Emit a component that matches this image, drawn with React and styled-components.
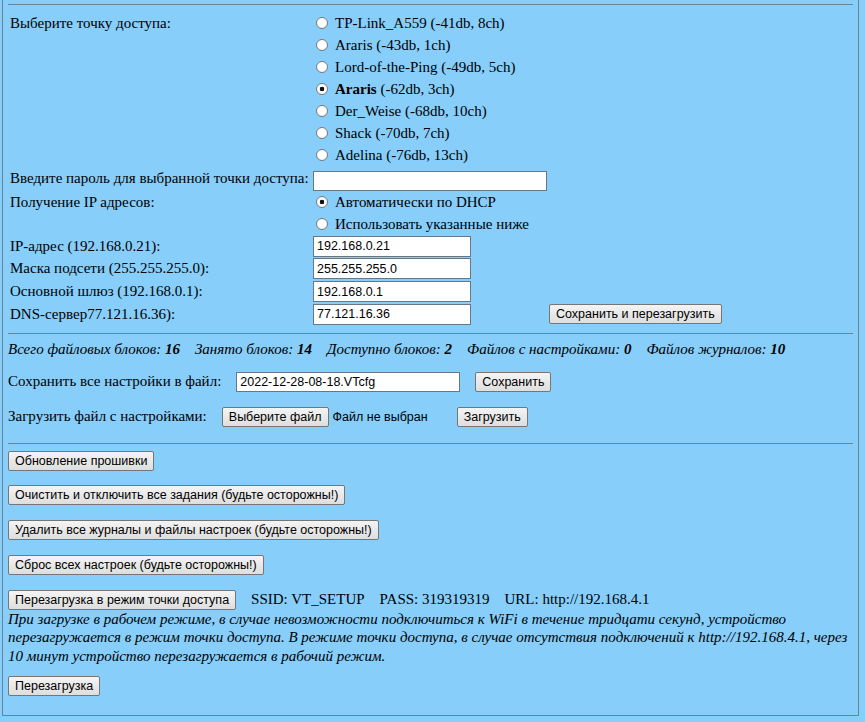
import React from 'react';
import styled, { createGlobalStyle } from 'styled-components';

const Global = createGlobalStyle`
  html, body { margin: 0; padding: 0; background: #87cefa; }
  body {
    font-family: "Liberation Serif", "Times New Roman", serif;
    font-size: 15px;
    color: #000;
  }
`;

const Frame = styled.div`
  box-sizing: border-box;
  height: 716px;
  margin: 0 6px 0 2px;
  border: 1px solid #6b8396;
  border-top: none;
  padding: 4px 5px 0 5px;
`;

const Rule = styled.hr`
  margin: ${p => p.$mt || 0}px 0 0 0;
  border: 0;
  border-top: 1px solid #6f8597;
  height: 0;
`;

const Grid = styled.div`
  display: grid;
  grid-template-columns: 301px 234px auto;
  column-gap: 2px;
  padding-left: 2px;
  margin-top: 7px;
`;

const Label = styled.div`
  grid-column: 1;
  display: flex;
  align-items: center;
  height: ${p => p.$h}px;
  align-self: start;
  white-space: nowrap;
`;

const RadioList = styled.div`
  grid-column: 2 / 4;
  display: flex;
  flex-direction: column;
`;

const RadioRow = styled.label`
  display: flex;
  align-items: center;
  height: 22px;
  white-space: nowrap;
`;

const Radio = styled.input.attrs({ type: 'radio' })`
  appearance: none;
  -webkit-appearance: none;
  box-sizing: border-box;
  width: 12px;
  height: 12px;
  margin: 0 7px 0 3px;
  border-radius: 50%;
  border: 1px solid #7a7a7a;
  background: radial-gradient(circle at 50% 40%, #ffffff 0, #ffffff 55%, #e4e4e4 100%);
  &:checked {
    background: radial-gradient(circle, #111 0, #111 2px, #ffffff 2.6px, #ffffff 100%);
  }
`;

const Cell = styled.div`
  grid-column: ${p => p.$col || 2};
  display: flex;
  align-items: ${p => p.$align || 'center'};
  height: ${p => p.$h}px;
  box-sizing: border-box;
`;

const Field = styled.input`
  box-sizing: border-box;
  width: ${p => p.$w}px;
  height: ${p => p.$hh || 20}px;
  margin: 0;
  padding: 0 3px;
  font-family: "Liberation Sans", Arial, sans-serif;
  font-size: 12.5px;
  color: #000;
  background: #fff;
  border: 1px solid #66778a;
  border-radius: 0;
  outline: none;
`;

const Btn = styled.button`
  box-sizing: border-box;
  height: 20px;
  margin: 0;
  padding: 0 6px;
  font-family: "Liberation Sans", Arial, sans-serif;
  font-size: 12.5px;
  color: #000;
  background: linear-gradient(#f4f4f4, #dedede);
  border: 1px solid #767676;
  border-radius: 2px;
  white-space: nowrap;
  cursor: default;
  flex: none;
`;

const Stats = styled.div`
  display: flex;
  gap: 15px;
  font-style: italic;
  line-height: 22px;
  margin-top: 4px;
  white-space: nowrap;
`;

const Line = styled.div`
  display: flex;
  align-items: center;
  height: 24px;
  margin-top: ${p => p.$mt || 0}px;
  gap: 15px;
  white-space: nowrap;
`;

const Plain = styled.span`
  font-family: "Liberation Sans", Arial, sans-serif;
  font-size: 12.5px;
  margin-left: -11px;
  margin-right: 14px;
`;

const Stack = styled.div`
  display: flex;
  flex-direction: column;
  align-items: flex-start;
  gap: 14.75px;
  margin-top: 7px;
`;

const SsidRow = styled.div`
  display: flex;
  align-items: center;
  gap: 15px;
  white-space: nowrap;
`;

const Info = styled.span`
  display: flex;
  gap: 15px;
`;

const Note = styled.p`
  margin: 0;
  font-style: italic;
  line-height: 18.5px;
`;

const Tail = styled.div`
  margin-top: 11px;
`;

const networks = [
  ['TP-Link_A559', '(-41db, 8ch)'],
  ['Araris', '(-43db, 1ch)'],
  ['Lord-of-the-Ping', '(-49db, 5ch)'],
  ['Araris', '(-62db, 3ch)', true],
  ['Der_Weise', '(-68db, 10ch)'],
  ['Shack', '(-70db, 7ch)'],
  ['Adelina', '(-76db, 13ch)'],
];

const ipRows = [
  ['IP-адрес (192.168.0.21):', '192.168.0.21'],
  ['Маска подсети (255.255.255.0):', '255.255.255.0'],
  ['Основной шлюз (192.168.0.1):', '192.168.0.1'],
  ['DNS-сервер77.121.16.36):', '77.121.16.36', true],
];

export default function App() {
  return (
    <>
      <Global />
      <Frame>
        <Rule />
        <Grid>
          <Label $h={22}>Выберите точку доступа:</Label>
          <RadioList>
            {networks.map(([name, info, sel], i) => (
              <RadioRow key={i}>
                <Radio name="ap" defaultChecked={!!sel} />
                {sel ? <b>{name}</b> : name}&nbsp;{info}
              </RadioRow>
            ))}
          </RadioList>

          <Label $h={25}>Введите пароль для выбранной точки доступа:</Label>
          <Cell $h={25} $align="flex-end">
            <Field type="password" $w={234} defaultValue="" />
          </Cell>

          <Label $h={22}>Получение IP адресов:</Label>
          <RadioList>
            <RadioRow>
              <Radio name="ip" defaultChecked />
              Автоматически по DHCP
            </RadioRow>
            <RadioRow>
              <Radio name="ip" />
              Использовать указанные ниже
            </RadioRow>
          </RadioList>

          {ipRows.map(([label, val, last], i) => (
            <React.Fragment key={i}>
              <Label $h={22.67}>{label}</Label>
              <Cell $h={22.67} $col={last ? 2 : '2 / 4'}>
                <Field $w={158} $hh={21} defaultValue={val} />
              </Cell>
              {last && (
                <Cell $h={22.67} $col={3}>
                  <Btn>Сохранить и перезагрузить</Btn>
                </Cell>
              )}
            </React.Fragment>
          ))}
        </Grid>

        <Rule $mt={7} />

        <Stats>
          <span>Всего файловых блоков: <b>16</b></span>
          <span>Занято блоков: <b>14</b></span>
          <span>Доступно блоков: <b>2</b></span>
          <span>Файлов с настройками: <b>0</b></span>
          <span>Файлов журналов: <b>10</b></span>
        </Stats>

        <Line $mt={10}>
          <span>Сохранить все настройки в файл:</span>
          <Field $w={224} defaultValue="2022-12-28-08-18.VTcfg" />
          <Btn>Сохранить</Btn>
        </Line>

        <Line $mt={11}>
          <span>Загрузить файл с настройками:</span>
          <Btn>Выберите файл</Btn>
          <Plain>Файл не выбран</Plain>
          <Btn>Загрузить</Btn>
        </Line>

        <Rule $mt={14} />

        <Stack>
          <Btn>Обновление прошивки</Btn>
          <Btn>Очистить и отключить все задания (будьте осторожны!)</Btn>
          <Btn>Удалить все журналы и файлы настроек (будьте осторожны!)</Btn>
          <Btn>Сброс всех настроек (будьте осторожны!)</Btn>
          <SsidRow>
            <Btn>Перезагрузка в режим точки доступа</Btn>
            <Info>
              <span>SSID: VT_SETUP</span>
              <span>PASS: 319319319</span>
              <span>URL: http://192.168.4.1</span>
            </Info>
          </SsidRow>
        </Stack>
        <Note>
          При загрузке в рабочем режиме, в случае невозможности подключиться к WiFi в течение тридцати секунд, устройство перезагружается в режим точки доступа. В режиме точки доступа, в случае отсутствия подключений к http://192.168.4.1, через 10 минут устройство перезагружается в рабочий режим.
        </Note>
        <Tail>
          <Btn>Перезагрузка</Btn>
        </Tail>
      </Frame>
    </>
  );
}
